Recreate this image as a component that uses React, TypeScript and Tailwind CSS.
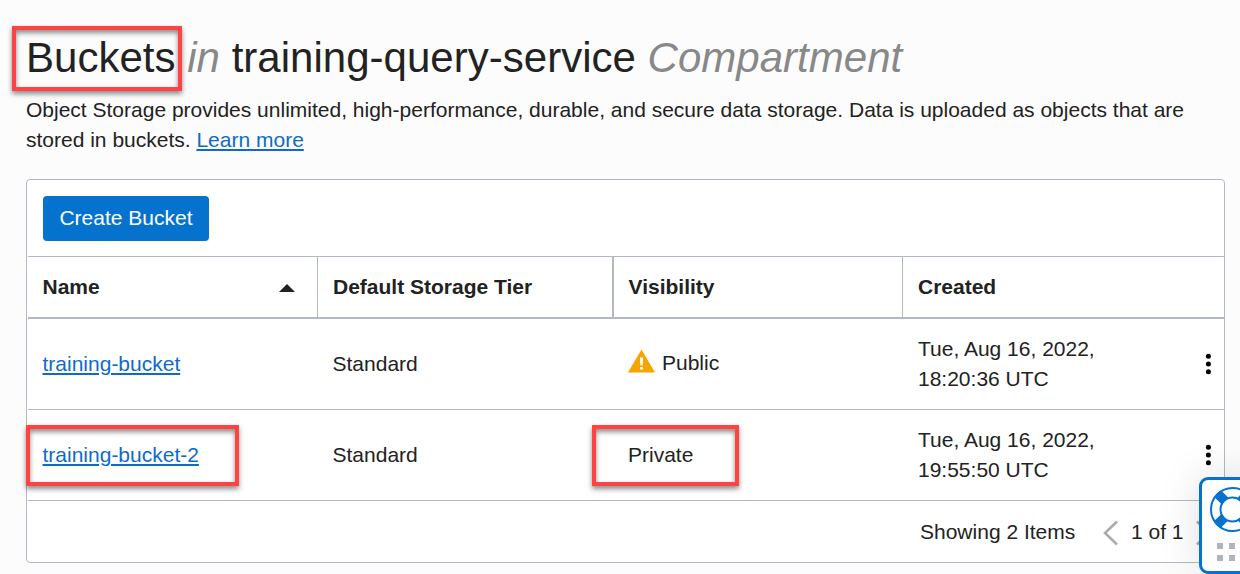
type Bucket = { name: string; tier: string; isPublic: boolean; date: string; time: string; marked?: boolean };

const buckets: Bucket[] = [
  { name: "training-bucket", tier: "Standard", isPublic: true, date: "Tue, Aug 16, 2022,", time: "18:20:36 UTC" },
  { name: "training-bucket-2", tier: "Standard", isPublic: false, date: "Tue, Aug 16, 2022,", time: "19:55:50 UTC", marked: true },
];

const columns = "grid grid-cols-[290px_296px_289px_1fr]";

function Highlight({ className }: { className: string }) {
  return (
    <span
      className={`pointer-events-none absolute z-10 border-4 border-[#ff4343] shadow-[0_3px_5px_rgba(0,0,0,0.45),inset_0_3px_5px_rgba(0,0,0,0.45)] ${className}`}
    />
  );
}

function Warning() {
  return (
    <svg width="27" height="24" viewBox="0 0 27 24" className="mt-[-4px] shrink-0">
      <path d="M13.5 0.5 27 23.5H0Z" fill="#f8a400" />
      <path d="M11.9 8.5h3.3l-.6 8h-2.1zM12.1 17.9h2.8v2.5h-2.8z" fill="#fff" />
    </svg>
  );
}

function Kebab() {
  return (
    <svg width="6" height="22" viewBox="0 0 6 22" className="mr-[13px]">
      <circle cx="3.4" cy="3.2" r="2.5" />
      <circle cx="3.4" cy="11" r="2.5" />
      <circle cx="3.4" cy="18.8" r="2.5" />
    </svg>
  );
}

function HelpWidget() {
  return (
    <aside className="absolute left-[1199px] top-[477px] z-20 h-[97px] w-[60px] rounded-[9px] border-3 border-[#0572ce] bg-white shadow-[0_0_40px_rgba(0,0,0,0.13)]">
      <svg width="46" height="46" viewBox="0 0 46 46" className="ml-[8px] mt-[6px]" fill="none" stroke="#0572ce">
        <path d="M7.8 7.8 15 15M31 31 38.2 38.2M38.2 7.8 31 15M15 31 7.8 38.2" strokeWidth="9.5" />
        <circle cx="22.5" cy="23.5" r="21.5" strokeWidth="2" />
        <circle cx="22.5" cy="23.5" r="12" strokeWidth="2" fill="#fff" />
      </svg>
      <div className="ml-[15px] mt-[11px] grid w-[30px] grid-cols-[6px_6px_6px] gap-[6px]">
        {[0, 1, 2, 3, 4, 5].map((i) => (
          <i key={i} className="size-[6px] bg-[#b0b5bd]" />
        ))}
      </div>
    </aside>
  );
}

export default function App() {
  return (
    <main className="relative h-[574px] w-[1240px] overflow-hidden bg-[#fcfcfc] pl-[26px] font-['Liberation_Sans',Arial,sans-serif] text-[21px] leading-[30px] text-[#222]">
      <Highlight className="left-[12px] top-[26px] h-[65px] w-[170px]" />
      <h1 className="whitespace-nowrap pt-[33px] text-[42px] leading-[50px] tracking-[0.02px]">
        Buckets <em className="text-[#888]">in</em> training-query-service <em className="text-[#888]">Compartment</em>
      </h1>
      <p className="mt-[12px] w-[1200px]">
        Object Storage provides unlimited, high-performance, durable, and secure data storage. Data is uploaded as objects that are
        <br />
        stored in buckets.{" "}
        <a className="text-[#0e6bc9] underline decoration-2 underline-offset-2">Learn more</a>
      </p>

      <section className="mt-[24px] h-[384px] w-[1199px] rounded-[4px] border border-[#b3b9c4] bg-white pl-px">
        <div className="h-[77px] border-b border-[#b3b9c4] pl-[15px] pt-[16px]">
          <button className="h-[45px] w-[166px] whitespace-nowrap rounded-[4px] bg-[#0572ce] pb-[2px] text-white">Create Bucket</button>
        </div>
        <div className={`${columns} h-[62px] border-b-2 border-[#b3b9c4] font-bold leading-[60px]`}>
          <div className="flex items-center justify-between border-r border-[#b3b9c4] pl-[14.5px] pr-[22px]">
            Name
            <svg width="16" height="8" viewBox="0 0 16 8" className="mt-[2px]">
              <path d="M8 0 16 8H0Z" fill="#222" />
            </svg>
          </div>
          <div className="border-r-2 border-[#b3b9c4] pl-[15px]">Default Storage Tier</div>
          <div className="border-r border-[#b3b9c4] pl-[14.5px]">Visibility</div>
          <div className="pl-[15px]">Created</div>
        </div>
        {buckets.map((b) => (
          <div key={b.name} className={`${columns} relative h-[91px] items-center border-b border-[#b3b9c4]`}>
            {b.marked && <Highlight className="left-[-2px] top-[15px] h-[61px] w-[213px]" />}
            {b.marked && <Highlight className="left-[564px] top-[15px] h-[61px] w-[147px]" />}
            <div className="pl-[14.5px]">
              <a className="text-[#0e6bc9] underline decoration-2 underline-offset-2">{b.name}</a>
            </div>
            <div className="pl-[14.5px]">{b.tier}</div>
            <div className={b.isPublic ? "flex items-center gap-[7px] pb-[2px] pl-[14px]" : "pl-[14px]"}>
              {b.isPublic && <Warning />}
              {b.isPublic ? "Public" : "Private"}
            </div>
            <div className="flex items-center justify-between pl-[15px]">
              <div>
                {b.date}
                <br />
                {b.time}
              </div>
              <Kebab />
            </div>
          </div>
        ))}
        <footer className="flex h-[61px] items-center pl-[892px]">
          <span className="w-[155px] shrink-0 whitespace-nowrap">Showing 2 Items</span>
          <svg width="16" height="26" viewBox="0 0 16 26" fill="none" stroke="#aaa" strokeWidth="2.5" className="ml-[27px] mt-[3px] shrink-0">
            <path d="M15 1.5 3 13 15 24.5" />
          </svg>
          <span className="ml-[13px] w-[52px] shrink-0 whitespace-nowrap">1 of 1</span>
          <svg width="16" height="26" viewBox="0 0 16 26" fill="none" stroke="#aaa" strokeWidth="2.5" className="ml-[13px] mt-[3px] shrink-0">
            <path d="M1 1.5 13 13 1 24.5" />
          </svg>
        </footer>
      </section>
      <HelpWidget />
    </main>
  );
}
